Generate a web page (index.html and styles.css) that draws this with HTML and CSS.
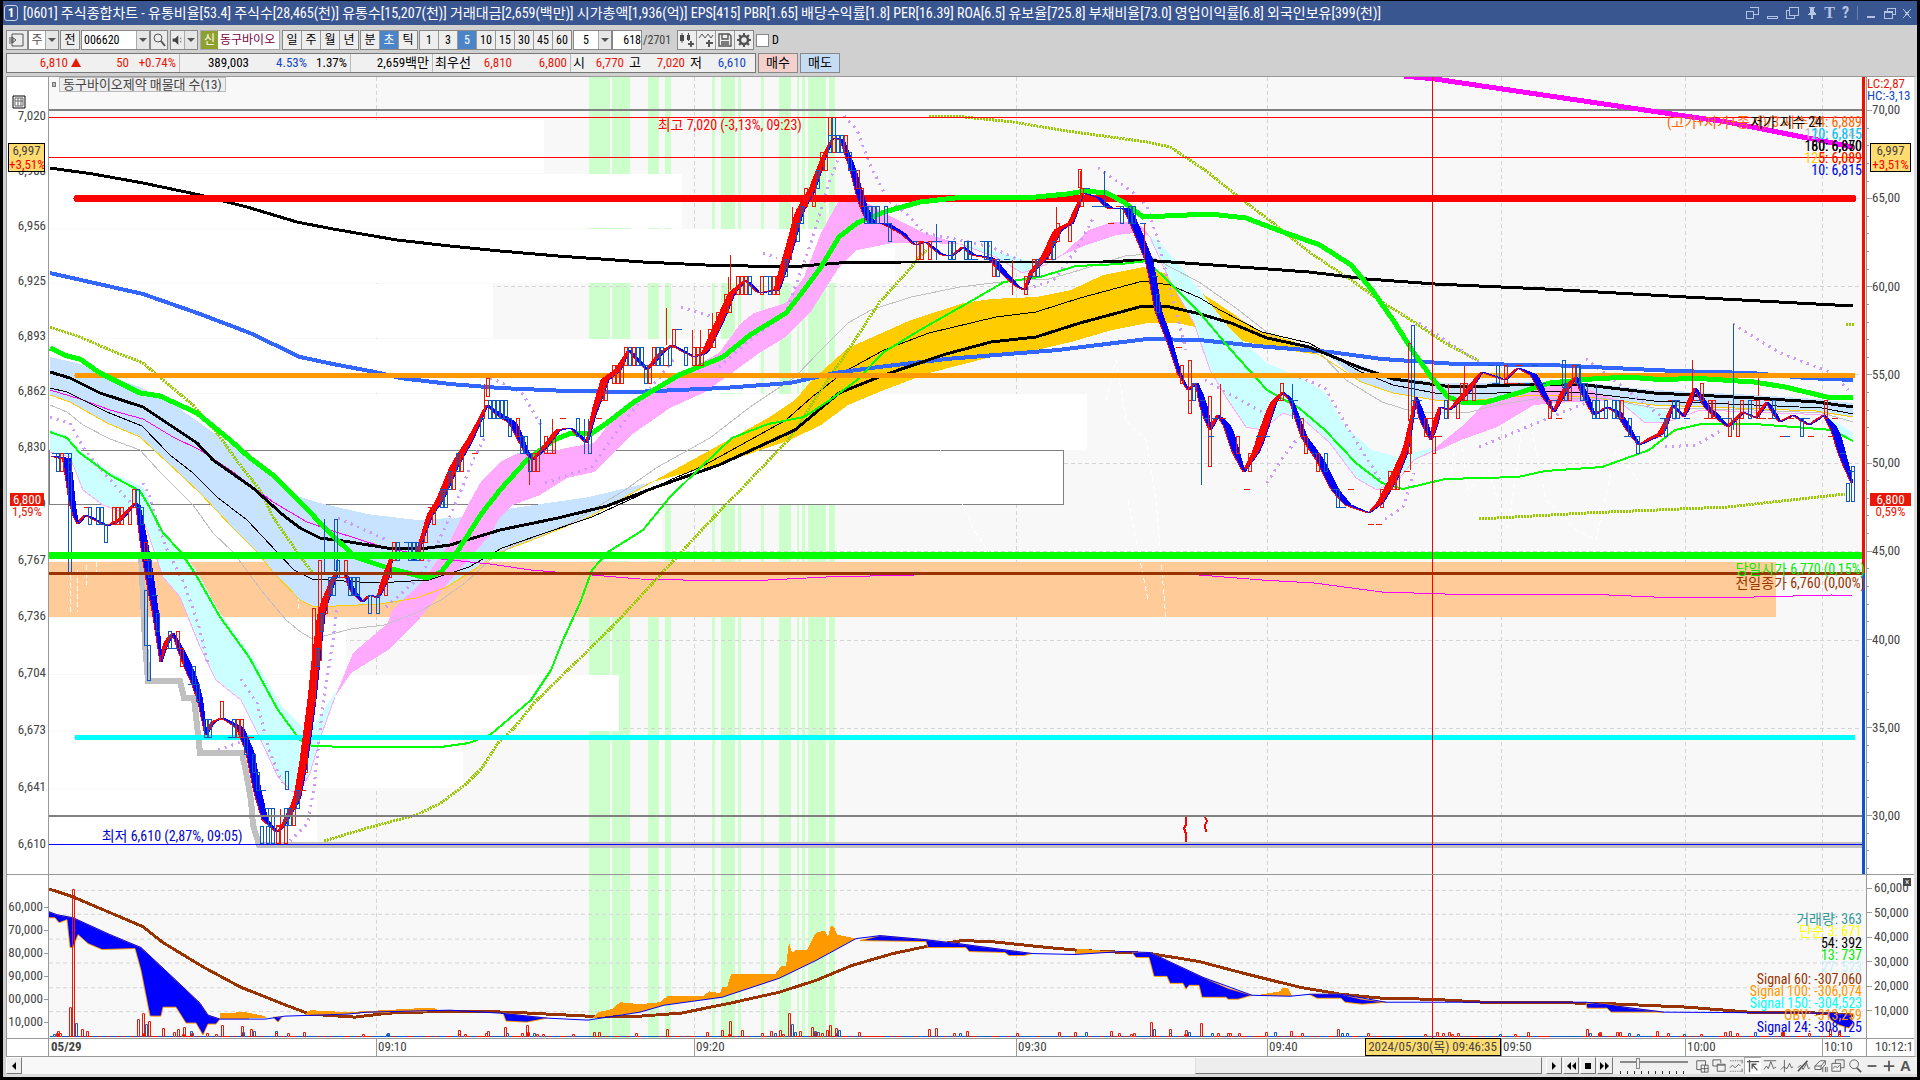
FILE: index.html
```html
<!DOCTYPE html>
<html lang="ko">
<head>
<meta charset="utf-8">
<title>[0601] 주식종합차트</title>
<link rel="stylesheet" href="styles.css">
</head>
<body>
<div class="window">
  <header class="titlebar">
    <span class="badge">1</span>
    <h1 class="title">[0601] 주식종합차트 - 유통비율[53.4] 주식수[28,465(천)] 유통수[15,207(천)] 거래대금[2,659(백만)] 시가총액[1,936(억)] EPS[415] PBR[1.65] 배당수익률[1.8] PER[16.39] ROA[6.5] 유보율[725.8] 부채비율[73.0] 영업이익률[6.8] 외국인보유[399(천)]</h1>
    <div class="winbtns">
      <button aria-label="분리"><svg viewBox="0 0 14 14"><path d="M5 1h8v7H8M1 5h7v7H1z"/></svg></button>
      <button aria-label="숨김"><svg viewBox="0 0 14 14"><path d="M2 10h10v2H2z"/></svg></button>
      <button aria-label="복사"><svg viewBox="0 0 14 14"><path d="M4 1h9v8H4zM4 4H1v8h8V9"/></svg></button>
      <button aria-label="고정"><svg viewBox="0 0 14 14"><path class="solid" d="M4 1h6v1H9v4l2 2v1H3V8l2-2V2H4zM6 9h2v4H6z"/></svg></button>
      <button aria-label="글꼴" class="glyph serif">T</button>
      <button aria-label="도움말" class="glyph">?</button>
      <i class="bar"></i>
      <button class="frame" aria-label="최소화"><svg viewBox="0 0 14 14"><path class="solid" d="M3 10h8v2H3z"/></svg></button>
      <button class="frame" aria-label="복원"><svg viewBox="0 0 14 14"><path d="M5 5V2h8v6h-3M2 5h8v7H2zM2 6h8"/></svg></button>
      <button class="frame" aria-label="닫기"><svg viewBox="0 0 14 14"><path d="M3 3l8 9M11 3l-8 9"/></svg></button>
    </div>
  </header>

  <div class="tools">
    <button class="box w22" aria-label="패널"><svg class="ico" viewBox="0 0 16 16"><path d="M3 2h11v12H3zM1 5v7M4 6v5M7 8L3 5v6z"/></svg></button>
    <button class="box pair w31"><span>주</span><i class="arrow"></i></button>
    <button class="box w20 gapr">전</button>
    <div class="field w69"><input aria-label="종목코드" value="006620"><i class="arrow"></i></div>
    <button class="box w18" aria-label="검색"><svg class="ico" viewBox="0 0 16 16"><circle cx="7" cy="6" r="4"/><path d="M10 9l4 5" stroke-width="2"/></svg></button>
    <button class="box pair w29 gapl" aria-label="소리"><svg class="ico" viewBox="0 0 16 16"><path class="solid" d="M2 6h3l4-4v12L5 10H2z"/><path d="M12 5v2M12 9v2"/></svg><i class="arrow"></i></button>
    <div class="name"><b>신</b><span>동구바이오</span></div>
    <div class="seg"><button>일</button><button>주</button><button>월</button><button>년</button></div>
    <div class="seg"><button>분</button><button class="on">초</button><button>틱</button></div>
    <div class="seg"><button>1</button><button>3</button><button class="on">5</button><button>10</button><button>15</button><button>30</button><button>45</button><button>60</button></div>
    <div class="field w39"><input class="mid" aria-label="간격" value="5"><i class="arrow"></i></div>
    <div class="field w30"><input class="end" aria-label="표시 개수" value="618"></div>
    <span class="total">/2701</span>
    <div class="seg">
      <button aria-label="차트추가"><svg class="ico" viewBox="0 0 16 16"><path class="solid" d="M1 3h4v6H1zM8 3h3v5H8z"/><path d="M3 1v10M9.500 1v8"/><path d="M12 9v6M9 12h6" stroke-width="2"/></svg></button>
      <button aria-label="지표추가"><svg class="ico" viewBox="0 0 16 16"><path d="M1 6l3-4 3 4 3-4 3 4 2-3"/><path d="M11 8v7M8 11h7" stroke-width="2"/></svg></button>
      <button aria-label="저장"><svg class="ico" viewBox="0 0 16 16"><path d="M2 2h10l2 2v10H2zM5 2v5h6V2M4 10h8M4 12h8" stroke-width="1.4"/></svg></button>
      <button aria-label="설정"><svg class="ico" viewBox="0 0 16 16"><circle cx="8" cy="8" r="4" stroke-width="2.6"/><path d="M8 1v3M8 12v3M1 8h3M12 8h3M3 3l2 2M11 11l2 2M13 3l-2 2M3 13l2-2" stroke-width="2"/></svg></button>
    </div>
    <label class="check"><input type="checkbox">D</label>
  </div>

  <div class="quote">
    <dl class="quotes">
      <dd class="c1 up">6,810<i class="tri"></i></dd><dd class="c2 up">50</dd><dd class="c3 up sep">+0.74%</dd>
      <dd class="c4">389,003</dd><dd class="c5 down">4.53%</dd><dd class="c6 sep">1.37%</dd>
      <dd class="c7 sep">2,659백만</dd><dt class="c8">최우선</dt><dd class="c9 up">6,810</dd><dd class="c10 up sep">6,800</dd>
      <dt class="c11">시</dt><dd class="c12 up">6,770</dd><dt class="c13">고</dt><dd class="c12 up">7,020</dd><dt class="c13">저</dt><dd class="c12 down">6,610</dd>
    </dl>
    <button class="buy">매수</button>
    <button class="sell">매도</button>
  </div>

  <main class="chart">
    <div class="axis left">
      <ol class="prices"><li>7,020</li><li>6,988</li><li>6,956</li><li>6,925</li><li>6,893</li><li>6,862</li><li>6,830</li><li>6,799</li><li>6,767</li><li>6,736</li><li>6,704</li><li>6,673</li><li>6,641</li><li>6,610</li></ol>
      <svg class="calc" viewBox="0 0 14 14"><path d="M1 1h12v12H1z" stroke="#000"/><path d="M3 3h8v8H3zM6 3v8M9 3v8M3 6h8"/></svg>
      <div class="chip"><span>6,997</span><em>+3,51%</em></div>
      <div class="last"><b>6,800</b><em>1,59%</em></div>
    </div>
    <div class="plot">
      <svg class="price" viewBox="49 77 1817 797" preserveAspectRatio="none">
        <path class="bands" fill="#cfc" d="M589 77h21v797h-21zM612 77h18v797h-18zM648 77h11v797h-11zM665 77h6v797h-6zM712 77h3v797h-3zM721 77h14v797h-14zM738 77h3v797h-3zM761 77h3v797h-3zM779 77h12v797h-12zM797 77h2v797h-2zM802 77h3v797h-3zM808 77h18v797h-18zM829 77h6v797h-6z"/>
        <path class="grid" d="M376.5 77v797M694.5 77v797M1016.5 77v797M1267.5 77v797M1501.5 77v797M1685.5 77v797M1822.5 77v797M49 198.500h1814M49 286.500h1814M49 374.500h1814M49 463.500h1814M49 551.500h1814M49 640.500h1814M49 728.500h1814"/>
        <!-- volume by price -->
        <path fill="#fff" d="M49 120h495v53H49zM49 174h633v54H49zM49 229h846v54H49zM49 284h444v54H49zM49 339h710v54H49zM49 394h1038v56H49zM49 505h613v56H49zM49 618h297v56H49zM49 675h570v56H49zM49 732h414v56H49zM49 789h268v55H49z"/>
        <path fill="#fff" stroke="#808080" d="M49 450.500h1014v54H49z"/>
        <path fill="#fc9" d="M49 562h1727v55H49z"/>
        <g class="faint"><path d="M70 575v40M77 570v42M86 565v20M96 562v10M298 500v110M210 640l5 40 5-50 8 40 4-15 8 45 14 0 4 40 10 30 4-40 8 10M585 370l5-20 8 60 12-60 8 50 10-60M940 450l20 50 14 30 20 30M1106 400l10-40 10 60 20 20 10 60 10 120M1450 480l8-60 10 70 20-20 20 60 18-130 20 100 30 30 20 10 20-90 22 30M1128 500l20 100"/></g>
        <!-- clouds -->
        <path fill="#c8e3ff" d="M50 357L77 363 110 377 140 387 167 400 200 423 233 447 267 472 300 497 320 503 367 514 417 520 467 517 500 510 589 497 652 482 612 505 589 517 545 535 500 552 469 573 445 588 416 598 380 604 314 607 300 600 273 572 257 552 233 528 200 493 167 462 140 437 107 423 70 402 50 395zM1309 347L1361 366 1393 376 1445 383 1534 382 1586 383 1654 390 1754 395 1816 399 1853 403V417L1816 411 1654 405 1586 397 1534 395 1477 400 1435 400 1393 393 1361 382 1330 357z"/>
        <path fill="#fc0" d="M652 482L723 443 768 418 795 400 812 380 848 348 884 332 911 320 964 303 991 299 1036 297 1071 290 1103 275 1143 267 1170 275 1189 285 1220 305 1257 330 1299 343 1320 355 1273 348 1226 337 1199 328 1178 323 1147 323 1112 330 1071 342 1036 350 991 357 929 373 884 390 848 405 821 425 790 440 723 463z"/>
        <path fill="#cff" d="M50 430L67 435 80 450 110 472 143 487 163 530 180 550 196 570 220 613 253 657 282 707 302 727 314 725 339 687 322 733 310 773 302 788 292 792 278 777 257 732 241 700 216 680 200 647 180 597 163 577 147 530 137 507 122 512 103 505 83 490 70 457 50 452zM960 244L991 250 1036 263 1030 275 1022 273 996 257zM1150 237L1157 240 1178 263 1205 297 1231 330 1267 363 1299 377 1325 392 1346 427 1372 450 1398 457 1435 447V452L1414 460 1398 480 1377 490 1356 478 1330 443 1304 420 1283 413 1262 430 1246 427 1226 397 1210 370 1194 323 1168 277zM1618 400L1675 413 1665 423 1644 422 1628 410zM1827 416L1853 433V441L1832 427z"/>
        <path fill="#faf" d="M335 697L353 653 388 623 392 610 424 580 449 543 469 503 482 480 500 462 518 453 549 452 571 447 594 443 612 420 634 400 679 377 701 363 719 353 741 323 754 313 786 303 804 277 821 233 839 200 848 197 862 200 888 215 924 233 960 244 920 243 893 243 857 250 839 267 812 310 786 337 759 353 732 373 705 392 670 408 634 433 594 472 567 478 540 495 513 505 500 517 490 535 453 577 416 623 388 650 351 673zM1062 255L1089 230 1112 222 1130 222 1143 227 1150 237 1143 232 1116 235 1089 244zM1435 448L1466 423 1487 400 1534 385 1571 383 1618 400 1571 402 1534 405 1497 427 1461 440 1435 452z"/>
        <g class="thin">
          <path stroke="#fc0" d="M50 395L70 402 107 423 140 437 167 462 200 493 233 528 257 552 273 572 300 600 314 607 380 604 416 598 445 588 469 573 500 552 545 535 589 517 652 482M1320 355L1361 382 1393 393 1435 400 1477 400 1534 395 1586 397 1654 405 1816 411 1853 417"/>
          <path stroke="#faf" d="M50 452L70 457 83 490 103 505 122 512 137 507 147 530 163 577 180 597 200 647 216 680 241 700 257 732 278 777 292 792 302 788 310 773 322 733 335 697M960 244L996 257 1022 273 1045 265 1067 252M1150 237L1168 277 1194 323 1210 370 1226 397 1246 427 1262 430 1283 413 1304 420 1330 443 1356 478 1377 490 1398 480 1414 460 1435 450M1618 400L1644 422 1665 423 1700 410 1830 415"/>
          <path stroke="#c0c0c0" d="M50 405L67 412 83 425 110 439 140 450 160 472 193 505 213 533 233 552 261 590 286 620 302 633 313 639 351 629 384 625 416 613 441 600 465 583 490 560 514 545 571 523 592 510 625 490 656 468 710 438 750 407 795 377 821 350 848 323 871 310 911 297 960 287 1009 281 1049 279 1080 270 1125 256 1147 254 1170 267 1199 282 1236 308 1273 337 1320 353 1346 380 1382 402 1414 412 1466 413 1497 405 1534 399 1602 398 1654 408 1754 410 1822 413 1853 422"/>
          <path stroke="#f0f" d="M50 390L80 399 110 410 143 419 173 437 200 450 233 472 273 502 307 522 333 531 383 547 441 559 490 564 531 570 640 579 683 580 768 580 826 577 915 575M1199 575L1262 580 1314 583 1382 592 1445 594 1586 594 1654 597 1754 597 1832 595 1852 596"/>
          <path stroke="#000" d="M50 388L67 392 107 412 142 426 170 455 193 473 217 497 247 520 277 552 294 570 312 579 376 583 429 580 469 567 502 548 539 535 592 517 640 495 670 480 701 467 750 440 786 420 812 397 844 372 884 350 929 333 996 317 1036 312 1080 298 1143 281 1170 285 1200 298 1220 310 1262 332 1309 343 1361 372 1393 385 1435 393 1497 393 1550 391 1586 393 1654 401 1754 405 1822 408 1853 414"/>
        </g>
        <g class="dots" stroke="#9c0" stroke-width="3"><path d="M50 327L80 337 110 350 143 363 163 380 193 405 217 433 240 465 260 490 273 517 297 552 312 572M324 841L367 828 416 815 441 803 465 785 482 768 498 743 514 728 535 702 571 667 612 627 640 597 674 560 714 517 750 480 790 438 821 390 853 343 879 303 906 273 926 250M929 116L964 117 1013 122 1067 131 1147 142 1170 147 1205 170 1236 195 1273 223 1309 252 1351 280 1382 302 1414 322 1445 343 1479 361M1479 519L1586 513 1728 507 1845 494M1846 324h8"/></g>
        <g class="dots wide" stroke="#c9f" stroke-width="3"><path d="M50 417L70 423 83 447 103 472 130 502M143 483L150 497 157 523 168 552 184 583 200 630 208 665M241 679L257 703 269 750 282 783M218 750L241 742M290 841L308 823 314 787 322 713 333 640 337 610M338 518L387 540M386 607L420 577 433 553 447 523 460 493 473 460 485 437M490 378L500 382 522 393 542 427M545 483L592 467 625 420 676 357M681 307L710 316M719 367L750 340 786 313 812 240 830 180 839 157M763 253L777 258M844 116L857 130 871 167 888 200 906 213 924 233 960 240 991 247 1025 263M1027 289L1054 280 1076 250 1094 217M1098 168L1134 193 1147 207 1157 237 1173 300 1186 350M1205 380L1231 395 1262 412M1267 483L1283 457 1299 437M1299 377L1325 388 1351 433 1382 483M1385 519L1403 507 1414 473M1419 323L1479 362M1479 447L1539 422 1586 403M1586 359L1623 387 1662 417M1665 447L1696 445 1722 430M1733 324L1780 353 1832 373 1848 390"/></g>
        <path class="line" stroke="#c0c0c0" stroke-width="6" d="M141 552L145 643 148 681H180L184 698H194L200 753H242L246 772 251 800 253 825 259 845H1862"/>
        <path class="line" stroke="#36f" stroke-width="4" d="M50 273L143 294 200 314 250 333 300 357 333 364 375 372 400 378 450 384 500 388 567 391 634 392 723 388 790 383 835 373 879 367 946 359 1058 350 1147 339 1199 340 1257 346 1330 352 1382 359 1456 364 1550 365 1675 371 1751 373 1806 378 1853 380"/>
        <path class="line" stroke="#000" stroke-width="3" d="M50 168L93 174 143 183 200 195 247 207 297 222 333 229 397 240 450 246 500 251 558 256 643 262 705 265 790 267 839 263 902 262 1103 262 1143 260 1199 264 1309 272 1367 279 1435 284 1545 289 1686 297 1853 306"/>
        <path class="line" stroke="#000" stroke-width="3" d="M50 372L70 378 100 393 143 407 167 423 197 443 213 460 253 488 283 515 300 528 320 538 350 542 387 548 420 549 450 545 477 537 500 530 558 518 607 506 656 487 719 465 795 430 839 393 884 375 946 354 991 342 1036 337 1080 323 1143 306 1170 307 1200 314 1231 323 1267 338 1309 347 1361 368 1393 379 1445 386 1487 386 1534 384 1586 385 1654 393 1754 398 1816 402 1853 407"/>
        <path class="line" stroke="#0f0" stroke-width="2" d="M50 432L67 438 80 453 110 475 140 491 150 508 163 533 180 551 196 575 220 617 249 657 278 710 300 740 312 746 351 747 441 747 469 743 490 735 510 718 531 700 551 670 563 640 580 603 592 570 608 552 643 530 670 497 701 467 732 438 768 424 804 417 830 400 857 380 884 352 920 330 973 300 1004 282 1040 277 1076 266 1121 264 1147 261 1170 283 1200 313 1231 350 1267 390 1299 408 1325 430 1356 463 1382 483 1403 489 1445 479 1518 477 1545 471 1602 467 1649 450 1675 430 1701 424 1754 424 1832 430 1853 441"/>
        <path class="line" stroke="#f00" stroke-width="7" stroke-linecap="round" d="M77 198.500H1853"/>
        <path class="line" stroke="#f90" stroke-width="5" stroke-linecap="round" d="M77 375.500H1853"/>
        <path class="line" stroke="#0ff" stroke-width="5" stroke-linecap="round" d="M77 737.500H1853"/>
        <path class="line" stroke="#0f0" stroke-width="5" d="M50 348L67 356 80 359 100 373 140 393 160 396 197 413 230 440 250 458 273 475 303 505 327 530 355 557 388 568 427 578 441 572 457 552 482 513 500 490 527 460 554 440 571 433 592 433 607 423 634 402 679 375 696 368 723 357 750 335 786 313 804 290 821 267 839 237 857 223 884 212 920 202 964 197 1036 197 1067 194 1085 191 1107 193 1125 203 1143 217 1210 214 1246 218 1283 232 1320 245 1351 265 1372 290 1393 320 1414 353 1435 382 1448 397 1461 402 1487 402 1518 393 1550 383 1592 379 1628 377 1665 380 1691 378 1754 382 1785 387 1827 397 1853 397"/>
        <g id="ribbon"></g>
        <g id="candles"></g>
        <path class="line" stroke="#808080" stroke-width="2" d="M49 110H1863M49 816H1863"/>
        <path class="line" stroke="#f00" d="M49 117.500H1863M49 157.500H1863"/>
        <path class="line" stroke="#00f" d="M49 844.500H1863"/>
        <path class="line" stroke="#f00" stroke-width="2" d="M1186 817v8l-2 3 2 6v8M1205 817l2 4-2 4 1 7"/>
        <path class="line" stroke="#0f0" stroke-width="7" d="M49 555.500H1863"/>
        <path class="line" stroke="#930" stroke-width="3" d="M49 573.500H1863"/>
        <path class="line" stroke="#f0f" stroke-width="5" d="M1404 76L1435 79 1685 116 1727 122 1853 147"/>
        <path fill="#e10" d="M1862 77h3v496h-3z"/><path fill="#15c" d="M1862 573h3v301h-3z"/>
        <path class="line" stroke="#f00" d="M1432.500 77v797"/>
      </svg>
      <div class="caption"><i></i><span>동구바이오제약 매물대 수(13)</span></div>
      <p class="note high">최고 7,020 (-3,13%, 09:23)</p>
      <p class="note low">최저 6,610 (2,87%, 09:05)</p>
      <ul class="legend top">
        <li><span class="orange">(고가+저가+종가)/3 지수 24: 6,889</span><span class="black shift">저가 지수 24</span></li>
        <li><span class="gray">120: 6,845</span><span class="sky">10: 6,815</span></li>
        <li><span class="black">180: 6,850</span><span class="black">60: 6,870</span></li>
        <li><span class="gold">120: 6,889</span><span class="red">5: 6,089</span></li>
        <li><span class="pale">30: 6,815</span><span class="blue">10: 6,815</span></li>
      </ul>
      <ul class="legend base"><li><span class="green">당일시가 6,770 (0,15%)</span></li><li><span class="brown">전일종가 6,760 (0,00%)</span></li></ul>
    </div>
    <div class="axis right">
      <svg class="ticks" viewBox="0 0 6 797" preserveAspectRatio="none"><path id="ticks"/></svg>
      <ol class="rates"><li>70,00</li><li>65,00</li><li>60,00</li><li>55,00</li><li>50,00</li><li>45,00</li><li>40,00</li><li>35,00</li><li>30,00</li></ol>
      <div class="lchc"><span class="up">LC:2,87</span><span class="down">HC:-3,13</span></div>
      <div class="chip"><span>6,997</span><em>+3,51%</em></div>
      <div class="last"><b>6,800</b><em>0,59%</em></div>
    </div>

    <div class="axis left vol">
      <ol class="amounts"><li>60,000</li><li>70,000</li><li>80,000</li><li>90,000</li><li>00,000</li><li>10,000</li></ol>
    </div>
    <div class="plot vol">
      <svg class="price" viewBox="49 874 1817 164" preserveAspectRatio="none">
        <path fill="#cfc" d="M589 874h21v164h-21zM612 874h18v164h-18zM648 874h11v164h-11zM665 874h6v164h-6zM712 874h3v164h-3zM721 874h14v164h-14zM738 874h3v164h-3zM761 874h3v164h-3zM779 874h12v164h-12zM797 874h2v164h-2zM802 874h3v164h-3zM808 874h18v164h-18zM829 874h6v164h-6z"/>
        <path class="grid" d="M376.500 877v161M694.500 877v161M1016.500 877v161M1267.500 877v161M1501.500 877v161M1685.500 877v161M1822.500 877v161M49 889.500h1814M49 913.500h1814M49 938.500h1814M49 962.500h1814M49 987.500h1814M49 1011.500h1814"/>
        <path class="line" stroke="#930" stroke-width="3" d="M49 888L73 896 143 926 163 942 204 967 241 987 286 1005 310 1014 355 1017 388 1013 449 1011 510 1012 588 1016 640 1016 681 1013 730 1003 779 992 816 980 852 965 893 953 926 946 962 940 991 941 1048 947 1081 950 1150 953 1199 961 1244 973 1280 982 1300 987 1341 994 1382 998 1431 999 1484 1002 1598 1003 1688 1007 1749 1012 1827 1013 1853 1015"/>
        <path fill="#f90" d="M220 1013L245 1012 265 1016 267 1018 220 1019zM304 1015L310 1010 347 1012 384 1010 420 1008 435 1008 439 1011 367 1013 347 1014zM592 1018L598 1012 612 1009 620 1002 640 1004 660 1002 667 996 703 996 709 991 720 993 722 987 727 987 731 974 775 974 781 966 786 965 789 942 792 952 797 949 807 949 816 932 825 930 828 936 831 925 834 926 837 934 856 938 816 960 779 978 722 997 664 1005 640 1012zM1074 954L1078 948 1100 950 1121 951zM1256 995L1280 991 1282 988 1288 988 1292 996H1256z"/>
        <path fill="#00f" stroke="#f90" d="M49 917L55 917 59 922 67 919 70 947H73L78 934 88 943 102 949 135 948 141 970 150 1016H161L163 1007H176L186 1023H196L203 1035 208 1024H216L220 1019 208 1015 200 1003 176 980 141 947 110 934 73 917 57 914 49 911M273 1017H282L278 1022zM503 1013L547 1018 527 1022 506 1021zM860 940L926 941 928 947 966 947 969 951 1005 952 1009 955H1024L1032 953 995 948 958 943 925 939 880 935zM1136 957H1149L1154 976H1167L1170 983H1183L1186 989 1189 985H1199L1202 997H1226L1228 999H1238L1252 995 1228 988 1203 977 1167 960 1150 952H1132zM1317 998H1341L1345 1002 1362 1004 1386 1002 1362 999 1341 994H1309zM1586 1003L1587 1008H1607L1611 1012H1664L1631 1008 1607 1004zM1827 1013L1831 1020 1839 1025 1849 1028 1853 1023 1851 1015z"/>
        <path class="line" stroke="#00f" d="M49 911L57 914 73 917 110 934 141 947 176 980 200 1003 208 1015 220 1019 265 1019 285 1016 347 1014 367 1012 450 1010 500 1013 547 1018 588 1020 640 1012 664 1005 722 997 779 978 816 960 856 938 880 935 925 939 958 943 1032 953 1075 954 1121 951 1150 952 1203 977 1252 995 1290 996 1310 994 1341 994 1386 1002 1586 1002 1664 1012 1827 1013 1851 1015"/>
        <g id="volume"></g>
        <path class="line" stroke="#f00" d="M1432.500 874v164"/>
      </svg>
      <ul class="legend sig">
        <li><span class="teal">거래량: 363</span></li><li><span class="yellow">단순 3: 671</span></li><li><span class="black">54: 392</span></li><li><span class="green">13: 737</span></li><li><span class="pale">27: 523</span></li>
        <li><span class="brown">Signal 60: -307,060</span></li><li><span class="amber">Signal 100: -306,074</span></li><li><span class="cyan">Signal 150: -304,523</span></li><li><span class="amber">OBV: -313,259</span></li><li><span class="blue">Signal 24: -308,125</span></li>
      </ul>
    </div>
    <div class="axis right vol">
      <ol class="amounts"><li>60,000</li><li>50,000</li><li>40,000</li><li>30,000</li><li>20,000</li><li>10,000</li></ol>
      <button class="close" aria-label="지표 닫기">×</button>
    </div>

    <div class="corner"></div>
    <div class="times">
      <b>05/29</b><span>09:10</span><span>09:20</span><span>09:30</span><span>09:40</span><span>09:50</span><span>10:00</span><span>10:10</span>
      <div class="stamp">2024/05/30(목) 09:46:35</div>
    </div>
    <div class="clock">10:12:1</div>
  </main>

  <footer class="bottom">
    <button class="key" aria-label="왼쪽으로"><svg viewBox="0 0 12 12"><path d="M8 2v8L4 6z"/></svg></button>
    <div class="track"><div class="thumb"></div></div>
    <div class="keys">
      <button class="key" aria-label="재생"><svg viewBox="0 0 12 12"><path d="M4 2v8l4-4z"/></svg></button>
      <button class="key" aria-label="뒤로"><svg viewBox="0 0 12 12"><path d="M6 2v8L2 6zM11 2v8L7 6z"/></svg></button>
      <button class="key" aria-label="정지"><svg viewBox="0 0 12 12"><path d="M3 3h6v6H3z"/></svg></button>
      <button class="key" aria-label="앞으로"><svg viewBox="0 0 12 12"><path d="M1 2v8l4-4zM6 2v8l4-4z"/></svg></button>
    </div>
    <input class="speed" type="range" aria-label="속도" min="0" max="100" value="25">
    <div class="icons">
      <button aria-label="추가"><svg class="ico" viewBox="0 0 16 16"><path d="M7 12H2V2h10v5"/><path d="M7 7h8v8H7zM11 7v8M7 11h8"/></svg></button>
      <button aria-label="겹침"><svg class="ico" viewBox="0 0 16 16"><path d="M6 8H1V1h9v4"/><path d="M6 6h9v8H6zM6 7h9"/></svg></button>
      <button aria-label="구간"><svg class="ico" viewBox="0 0 16 16"><path stroke-dasharray="1 1" d="M1 2h14M1 14h14"/><path d="M1 10l3-3 3 3 4-4 2 2M15 1v4M15 11v4"/></svg></button>
      <button class="on" aria-label="십자선"><svg class="ico" viewBox="0 0 16 16"><path d="M1 3h14M4 1v14M7 6l6 7M7 11V6h5" stroke-width="1.500"/></svg></button>
      <button aria-label="수평"><svg class="ico" viewBox="0 0 16 16"><path d="M1 2h14M1 12l3-4 2 3 3-8 3 8 3-2"/></svg></button>
      <button aria-label="수직"><svg class="ico" viewBox="0 0 16 16"><path d="M5 1v14M1 12l3-3 4 2 3-6 2 5 2-1"/></svg></button>
      <button aria-label="추세"><svg class="ico" viewBox="0 0 16 16"><path d="M1 14L12 2" stroke-width="2"/><path d="M1 10l3-3 3 5 4-7 2 6 2-1"/></svg></button>
      <button aria-label="모두 지움"><svg class="ico" viewBox="0 0 16 16"><path d="M1 8l6-6h6l-5 6zM1 8v4h7V8M8 12l5-6V2M10 10v5M13 9v6M15 9v6"/></svg></button>
      <button aria-label="복제"><svg class="ico" viewBox="0 0 16 16"><path d="M5 5V1h10v9h-4M1 5h10v9H1zM2 11l3-3 2 2 3-3"/></svg></button>
      <button aria-label="확대경"><svg class="ico" viewBox="0 0 16 16"><circle cx="7" cy="6" r="5"/><path d="M10 10l5 5" stroke-width="2"/></svg></button>
      <button aria-label="축소"><svg class="ico" viewBox="0 0 16 16"><path d="M3 8h10" stroke-width="2"/></svg></button>
      <button aria-label="확대"><svg class="ico" viewBox="0 0 16 16"><path d="M2 8h12M8 2v12" stroke-width="2"/></svg></button>
      <button aria-label="자동"><b>A</b></button>
    </div>
  </footer>
</div>
<script src="chart.js"></script>
</body>
</html>
```
FILE: styles.css
```css
* { box-sizing: border-box; margin: 0; padding: 0; }
body {
  min-height: 100vh; display: flex; background: #000; color: #000;
  font: 13px/14px "Roboto Condensed", "Liberation Sans Narrow", "Liberation Sans", "Noto Sans CJK KR", sans-serif;
  padding: 1px 3px 3px;
}
button, input { font: inherit; color: inherit; }
button { border: 0; background: none; display: flex; align-items: center; justify-content: center; }
ol, ul { list-style: none; }
em { font-style: normal; }
svg { display: block; }
.window { flex: 1; min-width: 0; display: flex; flex-direction: column; background: #d0d0d0; }
.up { color: #e81808; }
.down { color: #1048c8; }

.titlebar { height: 24px; background: #3a5691; color: #fff; display: flex; align-items: center; gap: 5px; padding: 0 2px 0 1px; }
.badge { width: 14px; height: 16px; border: 1px solid #c8d4ec; border-radius: 3px; text-align: center; font-weight: bold; }
.title { flex: 1; font-size: 14px; line-height: 20px; font-weight: normal; white-space: nowrap; overflow: hidden; }
.winbtns { display: flex; align-items: center; color: #b4c4e4; gap: 1px; }
.winbtns button { width: 19px; height: 20px; }
.winbtns .frame { width: 17px; }
.winbtns svg { width: 14px; height: 14px; fill: none; stroke: #b4c4e4; shape-rendering: crispEdges; }
.winbtns .solid { fill: #b4c4e4; stroke: none; }
.winbtns .glyph { width: 15px; font-size: 16px; font-weight: bold; }
.winbtns .serif { font-family: "Liberation Serif", serif; }
.winbtns .bar { width: 1px; height: 14px; background: #6a80b0; margin: 0 3px; }

.tools { display: flex; height: 28px; padding: 5px 0 3px 3px; font-size: 12px; }
.box, .seg, .field { border: 1px solid #888; background: #eee; height: 20px; }
.box { background: #ececec; }
.pair { justify-content: space-between; }
.pair span { flex: 1; background: #fff; color: #555; height: 18px; line-height: 18px; }
.arrow { width: 13px; height: 18px; flex: none; background: #e6e6e6; border-left: 1px solid #aaa; display: flex; align-items: center; justify-content: center; }
.arrow::before { content: ""; border: 4px solid transparent; border-top-color: #555; border-bottom: 0; }
.w18 { width: 18px; } .w20 { width: 20px; } .w22 { width: 22px; } .w29 { width: 28px; } .w30 { width: 30px; }
.w31 { width: 31px; } .w39 { width: 39px; } .w69 { width: 69px; }
.gapr { margin: 0 1px; } .gapl { margin: 0 2px; }
.field { display: flex; background: #fff; }
.field input { flex: 1; min-width: 0; border: 0; background: none; outline: 0; padding: 0 2px; }
.field .mid { text-align: center; }
.field .end { text-align: right; padding: 0; }
.name { width: 80px; height: 20px; background: #fff; border: 1px solid #aaa; display: flex; align-items: center; color: #800040; margin-right: 2px; white-space: nowrap; overflow: hidden; }
.name b { width: 17px; height: 18px; line-height: 18px; background: #90a030; color: #fff; font-weight: normal; text-align: center; margin-right: 2px; }
.seg { display: flex; margin-right: 1px; }
.seg button { width: 19px; height: 18px; border-right: 1px solid #999; }
.seg button:last-child { border: 0; width: 18px; }
.seg .on { background: #4c84c8; color: #fff; }
.ico { width: 16px; height: 16px; fill: none; stroke: #555; }
.ico .solid { fill: #444; stroke: none; }
.total { width: 35px; line-height: 20px; color: #444; padding-left: 1px; }
.check { display: flex; align-items: center; gap: 3px; padding-left: 1px; }
.check input { appearance: none; width: 13px; height: 13px; background: #fff; border: 1px solid #888; }

.quote { display: flex; gap: 2px; height: 23px; padding: 0 0 3px 3px; }
.quotes { width: 750px; height: 20px; border: 1px solid #777; background: #f0f0f0; display: flex; line-height: 18px; text-align: right; white-space: nowrap; }
.quotes > * { padding-right: 3px; }
.quotes dt { text-align: left; padding: 0 0 0 2px; }
.sep { border-right: 1px solid #bbb; }
.c1 { width: 77px; } .c2 { width: 48px; } .c3 { width: 48px; } .c4 { width: 72px; } .c5 { width: 58px; } .c6 { width: 41px; }
.c7 { width: 82px; } .c8 { width: 38px; } .c9 { width: 44px; } .c10 { width: 56px; } .c11 { width: 12px; } .c12 { width: 44px; } .c13 { width: 17px; }
.tri { display: inline-block; border: 5px solid transparent; border-top: 0; border-bottom: 9px solid #e81808; margin-left: 3px; }
.buy, .sell { width: 40px; height: 20px; border: 1px solid #888; background: #f4d0cc; }
.sell { background: #c4dcf4; }

.chart {
  flex: 1; min-height: 0; margin: 0 0 0 3px; display: grid; background: #fff; border: 1px solid #999; border-right: 3px solid #ddd;
  grid-template-columns: 42px minmax(0, 1fr) 48px; grid-template-rows: minmax(0, 797fr) minmax(0, 164fr) 18px; color: #444;
}
.axis { position: relative; display: flex; flex-direction: column; min-height: 0; overflow: hidden; white-space: nowrap; }
.axis ol { flex: 1; display: flex; flex-direction: column; justify-content: space-between; }
.axis.left { text-align: right; border-right: 1px solid #999; }
.axis.right { border-left: 1px solid #999; }
.axis.vol, .plot.vol { border-top: 1px solid #999; }
.prices { padding: 32px 2px 23px 0; }
.prices li { flex: 55 0 0; }
.prices li:nth-child(n+6) { flex-grow: 56; }
.prices li:nth-child(n+10) { flex-grow: 57; }
.prices li:last-child { flex: 0 0 14px; }
.rates { padding: 26px 0 51px 5px; }
.amounts li { display: flex; align-items: center; height: 14px; }
.left .amounts { padding: 25px 0 9px; }
.left .amounts li { justify-content: flex-end; }
.left .amounts li::after { content: ""; width: 4px; height: 1px; background: #999; margin-left: 1px; }
.right .amounts { padding: 6px 0 20px; }
.right .amounts li::before { content: ""; width: 5px; height: 1px; background: #999; margin-right: 2px; }
.calc { position: absolute; left: 5px; top: 18px; width: 14px; height: 14px; fill: none; stroke: #666; }
.chip { position: absolute; top: 8.300%; left: 1px; right: 3px; background: #ffdc70; border: 1px solid #000; line-height: 14px; text-align: center; display: flex; flex-direction: column; overflow: hidden; white-space: nowrap; }
.chip em { color: #f00; line-height: 13px; }
.last { position: absolute; top: 52.200%; left: 3px; right: 4px; text-align: center; line-height: 13px; }
.right .last, .right .chip { left: 3px; right: 3px; }
.last b { display: block; font-weight: normal; background: #e81808; color: #fff; }
.last em { color: #e81808; background: #fff; display: block; line-height: 12px; }
.lchc { position: absolute; left: 0; top: 1px; display: flex; flex-direction: column; line-height: 12px; background: #fff; }
.ticks { position: absolute; left: 0; top: 0; width: 6px; height: 100%; fill: none; stroke: #999; }
.close { position: absolute; right: 3px; top: 3px; width: 8px; height: 8px; background: #444; color: #fff; font-size: 9px; line-height: 8px; }

.plot { position: relative; background: #f8f8f8; min-height: 0; overflow: hidden; }
.price { width: 100%; height: 100%; position: absolute; inset: 0; shape-rendering: crispEdges; fill: none; }
.price .grid { stroke: #d4d4d4; stroke-dasharray: 4 3; }
.price .thin, .price .line { fill: none; }
.faint { stroke: #fff; stroke-dasharray: 5 3; }
.dots { stroke-dasharray: 2 1; }
.dots.wide { stroke-dasharray: 2 5; }
.caption { position: absolute; left: 3px; top: 0; display: flex; align-items: center; gap: 3px; color: #444; }
.caption i { width: 4px; height: 5px; border: 1px solid #777; background: #bbb; }
.caption span { border: 1px solid #bbb; background: #eee; padding: 0 3px; line-height: 13px; }
.note { position: absolute; white-space: nowrap; font-size: 14px; }
.high { color: #f00; left: 33.500%; top: 5.100%; }
.low { color: #00c; left: 2.900%; top: 94.400%; }
.legend { position: absolute; right: 4px; text-align: right; font-size: 14px; line-height: 12px; white-space: nowrap; }
.legend li { display: grid; justify-items: end; }
.legend span { grid-area: 1 / 1; }
.legend.top { top: 4.900%; }
.legend.base { top: 60.800%; right: 1px; line-height: 14px; }
.legend.sig { top: 38px; }
.shift { padding-right: 40px; }
.orange { color: #f60; } .amber { color: #f90; } .gray { color: #bbb; } .sky { color: #0cf; } .gold { color: #fc0; } .red { color: #f00; }
.pale { color: #c8f0ff; } .blue { color: #00d; } .green { color: #0e0; } .brown { color: #930; } .teal { color: #399; } .yellow { color: #ff0; } .cyan { color: #0ff; } .black { color: #000; }

.corner, .times, .clock { border-top: 1px solid #999; }
.corner { border-right: 1px solid #999; }
.times { position: relative; display: grid; grid-template-columns: 327fr 318fr 322fr 251fr 234fr 184fr 137fr 44fr; line-height: 16px; }
.times > span { border-left: 1px solid #999; padding-left: 1px; }
.times b { padding-left: 2px; }
.stamp { position: absolute; left: 72.400%; width: 136px; top: -1px; bottom: 0; background: #ffdc70; border: 1px solid #000; text-align: center; overflow: hidden; white-space: nowrap; }
.clock { border-left: 1px solid #999; padding-left: 8px; line-height: 16px; overflow: hidden; white-space: nowrap; }

.bottom { height: 20px; display: flex; margin-left: 3px; background: #f0f0f0; border-bottom: 3px solid #ddd; }
.key { width: 16px; height: 17px; border: 1px solid; border-color: #fff #777 #777 #fff; background: #eee; }
.key svg { width: 12px; height: 12px; }
.track { flex: 1; background: #f8f8f8; display: flex; justify-content: flex-end; }
.thumb { width: 22.800%; background: #eee; border: 1px solid; border-color: #fff #777 #777 #ddd; }
.keys { display: flex; gap: 1px; padding-left: 4px; }
.speed { appearance: none; width: 68px; height: 17px; margin: 0 5px 0 7px; background: linear-gradient(#888, #888) 0 4px / 100% 2px no-repeat, repeating-linear-gradient(90deg, #333 0 1px, transparent 1px 7px) 0 14px / 100% 3px no-repeat; }
.speed::-webkit-slider-thumb { appearance: none; width: 4px; height: 11px; margin-top: -4px; background: #eee; border: 1px solid #888; }
.icons { display: flex; padding-right: 3px; }
.icons button { width: 17px; height: 17px; }
.icons .on { background: #fff; border: 1px solid #aaa; border-width: 1px 0 0 1px; }
.icons .ico { width: 14px; height: 14px; }
.icons b { font: bold 15px/17px "Liberation Sans", sans-serif; color: #555; }
```
FILE: chart.js
```js
// Tick price path: x, y pairs along the fast average.
const path = [52,456,67,459,73,510,78,524,85,515,92,518,107,526,120,520,128,511,135,503,138,505,145,550,155,610,161,662,165,645,173,633,183,655,195,683,200,700,206,735,213,722,222,718,230,722,240,728,250,752,257,790,265,820,277,832,282,828,290,812,297,800,304,760,312,700,317,650,322,610,335,575,345,572,352,590,362,602,370,595,378,598,385,580,392,556,405,556,415,560,420,545,430,515,440,500,455,465,470,440,480,420,487,405,497,413,513,423,527,453,533,460,545,447,558,430,571,428,587,443,594,413,605,380,618,370,629,350,647,370,661,353,672,345,694,357,705,353,719,323,732,293,746,280,759,293,777,290,790,247,799,213,812,190,824,157,833,138,842,140,853,170,862,203,871,223,884,223,902,233,915,245,926,242,942,255,953,255,963,247,973,255,991,258,1004,273,1018,287,1025,290,1031,273,1045,257,1058,230,1071,223,1083,193,1098,198,1109,208,1127,208,1138,233,1150,263,1158,310,1170,343,1179,373,1188,390,1197,383,1210,430,1218,415,1228,427,1236,453,1244,472,1257,450,1273,403,1283,392,1291,400,1304,437,1320,460,1335,490,1348,505,1369,513,1380,503,1393,480,1406,450,1413,413,1416,397,1422,417,1431,440,1440,407,1450,410,1466,393,1482,372,1505,380,1518,368,1534,375,1545,397,1554,412,1565,390,1576,377,1586,397,1594,415,1607,407,1618,412,1631,433,1639,445,1662,433,1673,405,1684,417,1695,388,1707,407,1728,427,1743,412,1756,418,1767,402,1780,422,1793,415,1809,425,1824,415,1835,430,1843,457,1852,483];
const RED = '#f00', BLUE = '#00f', UP = '#e81808', DOWN = '#1058c0';
const pts = [];
for (let i = 0; i < path.length; i += 2) pts.push([path[i], path[i + 1]]);
const priceAt = x => {
  const i = Math.max(1, pts.findIndex(p => p[0] >= x));
  const [a, b] = pts[i - 1], [c, d] = pts[i];
  return b + (d - b) * (x - a) / (c - a);
};

let up = '', down = '', lead = '', lag = '';
for (let i = 1; i < pts.length;) {
  const rising = pts[i][1] < pts[i - 1][1];
  let j = i;
  while (j + 1 < pts.length && (pts[j + 1][1] < pts[j][1]) === rising) j++;
  const x0 = pts[i - 1][0], x1 = pts[j][0];
  const drop = Math.abs(pts[j][1] - pts[i - 1][1]);
  const half = Math.min(4, 1 + drop / 18);
  const n = Math.max(4, Math.round((x1 - x0) / 3));
  const l = [], r = [];
  for (let k = 0; k <= n; k++) {
    const x = x0 + (x1 - x0) * k / n, y = priceAt(x);
    const w = 1 + (half - 1) * Math.sin(Math.PI * k / n);
    l.push(`${(x - w).toFixed(1)} ${y.toFixed(1)}`);
    r.push(`${(x + w).toFixed(1)} ${y.toFixed(1)}`);
  }
  const shape = 'M' + l.join('L') + 'L' + r.slice().reverse().join('L') + 'z';
  if (rising) up += shape; else down += shape;
  lead += 'M' + l.join('L');
  lag += 'M' + r.join('L');
  i = j + 1;
}
document.getElementById('ribbon').innerHTML =
  `<path fill="${RED}" d="${up}"/><path fill="${BLUE}" d="${down}"/><path stroke="${RED}" d="${lead}"/><path stroke="${BLUE}" d="${lag}"/>`;

let seed = 7;
const rnd = () => (seed = (seed * 16807) % 2147483647) / 2147483647;
const step = 726 / 41;
const level = n => Math.round(117 + Math.min(41, Math.max(0, n)) * step) + 0.5;

// Hollow candles, snapped to the ten-won grid.
let cu = '', cd = '';
const candle = (x, t, b) => `M${x}.5 ${t}h3V${b}h-3z`;
for (let x = 52; x < 1850; x += 4) {
  const r = rnd(), slope = priceAt(Math.min(x + 3, 1852)) - priceAt(x - 0.1);
  const n = Math.round((priceAt(x) - 117) / step - 0.5);
  const rising = slope < 0 ? r > 0.25 : r > 0.75;
  const density = x < 900 ? 0.7 : 0.34;
  let d = '';
  if (rnd() < density) d = candle(x, level(n), level(n + 1));
  else if (rnd() < 0.5) d = `M${x} ${level(rnd() < 0.5 ? n : n + 1)}h6`;
  if (rnd() < 0.05) d += `M${x}.5 ${level(n - 1)}V${level(n + 1)}`;
  if (rising) cu += d; else cd += d;
}
cu += candle(828, 117.5, 152.5) + candle(318, 560.5, 660.5) + candle(312, 608.5, 700.5) + candle(1078, 169.5, 187.5) +
  candle(486, 378.5, 396.5) + candle(1188, 360.5, 413.5) + candle(1208, 396.5, 466.5) + candle(1408, 343.5, 420.5) +
  candle(276, 826.5, 843.5) + candle(284, 808.5, 843.5) +
  'M730.5 255V290M666.500 308V345M1692.500 360V396M1758.500 378V396M529.500 460V485M1410.500 420V470';
cd += candle(68, 462.5, 572.5) + candle(334, 519.5, 570.5) + 'M324.500 519V572M1733.500 324V430' + candle(1411, 325.5, 400.5) +
  candle(832, 117.5, 135.5) + candle(144, 590.5, 645.5) + candle(147, 645.5, 680.5) + 'M1201.500 410V485' + candle(1562, 360.5, 387.5) +
  candle(260, 826.5, 843.5) + candle(266, 826.5, 843.5) + candle(271, 808.5, 843.5) + candle(285, 771.5, 789.5) +
  candle(1846, 483.5, 501.5) + candle(1851, 466.5, 501.5);
document.getElementById('candles').innerHTML = `<path stroke="${UP}" d="${cu}"/><path stroke="${DOWN}" d="${cd}"/>`;

// Volume bars: x, top.
const redBars = [58,1031,70,1007,73,888,82,1029,87,1031,138,1019,143,1013,149,1021,163,1028,178,1029,184,1027,222,1025,242,1026,251,1029,304,1032,459,1030,488,1031,505,1027,527,1025,594,1032,599,1032,667,1029,707,1032,722,1030,730,1021,742,1030,771,1031,780,1030,789,1013,800,1031,812,1027,827,1030,830,1025,836,1028,859,1032,929,1029,936,1028,967,1031,1075,1032,1111,1031,1151,1022,1170,1029,1186,1030,1201,1023,1228,1033,1291,1031,1338,1029,1528,1032,1587,1029,1600,1032,1657,1031,1730,1031,1783,1032,1830,1029,1839,1031];
const blueBars = [76,1023,146,1024,191,1031,254,1031,276,1031,388,1033,775,1033,792,1024,795,1032,815,1031,818,1032,839,1030,1154,1029,1189,1032,1342,1033,1684,1034];
let vr = '', vb = '';
for (let i = 0; i < redBars.length; i += 2) vr += `M${redBars[i] - 1}.5 1036.500V${redBars[i + 1]}.500h2V1036.500z`;
for (let i = 0; i < blueBars.length; i += 2) vb += `M${blueBars[i] - 1}.5 1036.500V${blueBars[i + 1]}.500h2V1036.500z`;
for (let x = 50; x < 1850; x += 3) {
  const h = rnd() < 0.12 ? 2 + Math.round(rnd() * 2) : 0;
  const d = h ? `M${x}.5 1036.500v-${h}h2v${h}z` : `M${x} 1036.500h3`;
  if (rnd() < (h ? 0.7 : 0.35)) vr += d; else vb += d;
}
document.getElementById('volume').innerHTML = `<path stroke="${DOWN}" d="${vb}"/><path stroke="${UP}" d="${vr}"/>`;

// Scale marks on the right axis, five to each labelled step.
let marks = '';
for (let i = 0; i <= 43; i++) {
  const y = Math.round(33 + i * 17.625);
  marks += `M0 ${y}.5h${i % 5 ? 2 : 5}`;
}
document.getElementById('ticks').setAttribute('d', marks);
```
